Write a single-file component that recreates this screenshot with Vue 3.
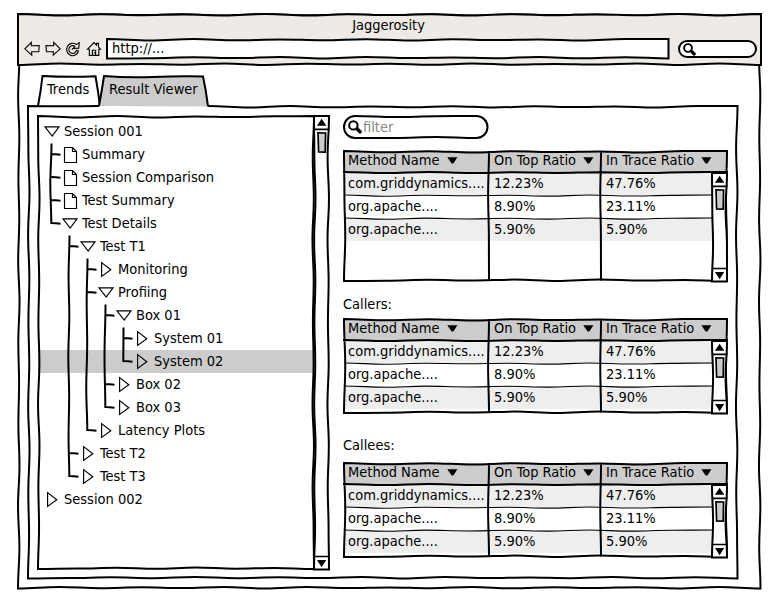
<script setup>
import { h } from 'vue'

/* Hand-drawn stroke: half waves that bend to the right-hand side of the line. */
function wave(x1, y1, x2, y2, seed = 1, amp = 1.4) {
  const len = Math.hypot(x2 - x1, y2 - y1)
  const n = Math.max(1, Math.round(len / 42))
  const ux = (x2 - x1) / len
  const uy = (y2 - y1) / len
  let px = x1
  let py = y1
  let d = ''
  for (let i = 1; i <= n; i++) {
    const t = (len * i) / n
    const k = Math.abs(Math.sin(seed * 12.9 + i * 4.1))
    const off = i === n ? 0 : i % 2 ? amp * (0.7 + 0.4 * k) : amp * 0.3 * k
    const x = x1 + ux * t - uy * off
    const y = y1 + uy * t + ux * off
    const s = (len / n) * 0.4
    d += `C${px + ux * s} ${py + uy * s} ${x - ux * s} ${y - uy * s} ${x} ${y}`
    px = x
    py = y
  }
  return d
}

const line = (x1, y1, x2, y2, seed, amp) => `M${x1} ${y1}` + wave(x1, y1, x2, y2, seed, amp)

const boxPath = (w, ht, s = 1) =>
  `M0 0${wave(0, 0, w, 0, s)}${wave(w, 0, w, ht, s + 1)}${wave(w, ht, 0, ht, s + 2)}${wave(0, ht, 0, 0, s + 3)}Z`

const pillPath = (w, ht) => {
  const r = ht / 2
  return `M${r} 0${wave(r, 0, w - r, 0, 2, 1)}A${r} ${r} 0 0 1 ${w - r} ${ht}${wave(w - r, ht, r, ht, 4, 1)}A${r} ${r} 0 0 1 ${r} 0Z`
}

const Sketch = (p) =>
  h('svg', { class: 'sketch', width: p.w, height: p.h, 'aria-hidden': 'true' }, [
    h('path', {
      d: p.d,
      fill: p.fill || 'none',
      stroke: p.stroke || '#000',
      'stroke-width': p.sw || 2,
      'stroke-linejoin': 'miter'
    })
  ])
Sketch.props = ['w', 'h', 'd', 'fill', 'stroke', 'sw']

const ScrollBar = (p) => {
  const t = p.h
  return h('svg', { class: 'scroll', width: 15, height: t, 'aria-hidden': 'true' }, [
    h('path', { d: boxPath(15, t, 3), fill: '#fff', stroke: '#000', 'stroke-width': 2 }),
    h('path', { d: `M0 13.4H15.5M0 ${t - 13}H15`, stroke: '#000', 'stroke-width': 1.6 }),
    h('path', { d: `M3 9.8L7.6 2.8L12.4 9.8ZM3 ${t - 9.6}H12.2L7.6 ${t - 2.2}Z`, fill: '#000' }),
    h('path', { d: 'M4 16.8L11.6 17L11.2 36.2L4.6 36Z', fill: '#ccc', stroke: '#000', 'stroke-width': 1.7 })
  ])
}
ScrollBar.props = ['h']

const Lens = (p) =>
  h('svg', { class: 'lens', width: p.size, height: p.size, viewBox: '0 0 13 13', 'aria-hidden': 'true' }, [
    h('circle', { cx: 5, cy: 5, r: 3.9, fill: '#fff', stroke: '#000', 'stroke-width': 1.9 }),
    h('path', { d: 'M8.3 8.2L11.2 11', stroke: '#000', 'stroke-width': 3.2, 'stroke-linecap': 'round' })
  ])
Lens.props = ['size']

const tree = [
  { text: 'Session 001', depth: 0, icon: 'open' },
  { text: 'Summary', depth: 1, icon: 'doc' },
  { text: 'Session Comparison', depth: 1, icon: 'doc' },
  { text: 'Test Summary', depth: 1, icon: 'doc' },
  { text: 'Test Details', depth: 1, icon: 'open' },
  { text: 'Test T1', depth: 2, icon: 'open' },
  { text: 'Monitoring', depth: 3, icon: 'closed' },
  { text: 'Profiing', depth: 3, icon: 'open' },
  { text: 'Box 01', depth: 4, icon: 'open' },
  { text: 'System 01', depth: 5, icon: 'closed' },
  { text: 'System 02', depth: 5, icon: 'closed', selected: true },
  { text: 'Box 02', depth: 4, icon: 'closed' },
  { text: 'Box 03', depth: 4, icon: 'closed' },
  { text: 'Latency Plots', depth: 3, icon: 'closed' },
  { text: 'Test T2', depth: 2, icon: 'closed' },
  { text: 'Test T3', depth: 2, icon: 'closed' },
  { text: 'Session 002', depth: 0, icon: 'closed' }
]
const ROW = 23
const STEP = 18

/* A trunk under each open node, and a short branch to each of its children. */
function connectors() {
  let d = ''
  tree.forEach((node, i) => {
    let last = -1
    const x = 13.5 + node.depth * STEP
    for (let j = i + 1; j < tree.length && tree[j].depth > node.depth; j++) {
      if (tree[j].depth === node.depth + 1) {
        last = j
        const y = j * ROW + 11
        d += `M${x} ${y}Q${x + 4} ${y + 0.2} ${x + 9} ${y + 0.7}`
      }
    }
    if (last > 0) d += line(x, (i + 1) * ROW + 0.5, x - 0.2, last * ROW + 12, i + 1, 1)
  })
  return d
}
const treeLines = connectors()

const icons = {
  open: 'M1 4.8H15L8.2 14.1Z',
  closed: 'M3.6 2.6V16.4L12.8 9.8Z',
  doc: 'M2.5 2.5H10.5L14.5 6.5V17.5H2.5ZM10.5 2.5V6.5H14.5'
}

const columns = ['Method Name', 'On Top Ratio', 'In Trace Ratio']
const rows = [
  ['com.griddynamics....', '12.23%', '47.76%'],
  ['org.apache....', '8.90%', '23.11%'],
  ['org.apache....', '5.90%', '5.90%']
]
const tables = [
  { title: '', height: 130, cls: 'main' },
  { title: 'Callers:', height: 94, cls: 'callers' },
  { title: 'Callees:', height: 94, cls: 'callees' }
]
const rules = (ht) =>
  line(145, 0, 145, ht, 2, 0.8) + line(257, 0, 257, ht, 5, 0.8) + line(-1, 21, 384, 21, 3, 1)
const thinRules = line(0, 44, 368, 44, 1, 1.1) + line(0, 67, 368, 67, 2, 1.1)
</script>

<template>
  <main class="window">
    <Sketch :w="743" :h="575" :d="boxPath(742.5, 574.5, 1)" fill="#fff" />
    <header class="chrome">
      <Sketch :w="743" :h="51" :d="boxPath(743, 51, 2)" fill="#eeebe6" />
      <h1>Jaggerosity</h1>
      <div class="toolbar">
        <nav class="nav">
          <svg width="16" height="16" viewBox="0 0 16 16">
            <path d="M.8 7.8L7.3 1.4V4.8L15.2 4.5L14.8 10.8H7.6L7.8 14.2Z" />
          </svg>
          <svg width="16" height="16" viewBox="0 0 16 16">
            <path d="M15.2 7.8L8.7 1.4V4.8L1 4.5L1.4 10.8H8.4L8.2 14.2Z" />
          </svg>
          <svg width="16" height="16" viewBox="0 0 16 16">
            <path d="M11.4 3.6A6 6.2 0 1 0 13.5 10L11.4 9.3A3.8 3.9 0 1 1 9.8 5.3L8.2 7.4L13.8 7.2L14.2 1.6L11.4 3.6Z" />
            <path d="M8.2 7.4L6.8 8.6" />
          </svg>
          <svg width="16" height="16" viewBox="0 0 16 16">
            <path d="M1.6 8.2L8 1.6L10.6 4.1V2.4H12.5V6L14.5 8.2H12.8V14.4H3.3V8.2ZM6.4 14.2V9.2H9.6V14.2" />
            <path d="M8.4 11.3V12.4" />
          </svg>
        </nav>
        <div class="address">
          <Sketch :w="562" :h="19" :d="boxPath(561.5, 19.5, 3)" fill="#fff" />
          <span>http://...</span>
        </div>
        <div class="search">
          <Sketch :w="77" :h="16" :d="pillPath(77, 16)" fill="#fff" />
          <Lens :size="13" />
        </div>
      </div>
    </header>

    <div class="tabs">
      <div class="tab first">
        <Sketch :w="62" :h="30" d="M0 30Q3 14 4.5 0Q30 1.5 57.5 .3Q60 14 62 30" fill="#fff" />
        <span>Trends</span>
      </div>
      <div class="tab active">
        <Sketch :w="109" :h="30" d="M0 30Q3 14 5 0Q28 2 54 1T104 .5Q107 14 109 30.4" fill="#ccc" />
        <span>Result Viewer</span>
      </div>
    </div>

    <section class="panel">
      <Sketch
        :w="710"
        :h="473"
        :d="line(180, 0, 709.5, 0, 3) + wave(709.5, 0, 709.5, 472.5, 4) + wave(709.5, 472.5, 0, 472.5, 5) + wave(0, 472.5, 0, 0, 6) + wave(0, 0, 71, 0, 7, 0.4)"
      />
      <div class="browser">
        <div class="tree">
          <ul>
            <li
              v-for="node in tree"
              :key="node.text"
              :class="{ selected: node.selected }"
              :style="{ paddingLeft: 6 + node.depth * STEP + 'px' }"
            >
              <svg class="node" width="16" height="19"><path :d="icons[node.icon]" /></svg>
              <span>{{ node.text }}</span>
            </li>
            <Sketch :w="276" :h="391" :d="treeLines" />
          </ul>
          <Sketch :w="276" :h="453" :d="boxPath(276, 453, 4)" />
        </div>
        <ScrollBar :h="453.5" />
      </div>

      <div class="results">
        <div class="filter">
          <Sketch :w="144" :h="22" :d="pillPath(143.5, 22)" fill="#fff" />
          <Lens :size="14" />
          <span>filter</span>
        </div>
        <template v-for="t in tables" :key="t.cls">
          <h2 v-if="t.title" :class="t.cls">{{ t.title }}</h2>
          <div class="grid" :class="t.cls">
            <div class="row head">
              <span v-for="c in columns" :key="c" class="cell">
                <b>{{ c }}</b>
                <svg width="11" height="7"><path d="M.3 .3H10.4L6.4 6.5H4.6Z" /></svg>
              </span>
            </div>
            <div class="body">
              <div v-for="(r, i) in rows" :key="i" class="row">
                <span v-for="(v, j) in r" :key="j" class="cell">{{ v }}</span>
              </div>
            </div>
            <Sketch :w="383" :h="t.height" :d="thinRules" :sw="1.1" />
            <Sketch :w="383" :h="t.height" :d="boxPath(383, t.height, 5) + rules(t.height)" />
            <div class="bar"><ScrollBar :h="t.height - 21.5" /></div>
          </div>
        </template>
      </div>
    </section>
  </main>
</template>

<style>
body {
  background: #fff;
}
.sketch {
  position: absolute;
  left: 0;
  top: 0;
  overflow: visible;
  pointer-events: none;
}
.scroll {
  display: block;
  position: relative;
  flex: none;
  overflow: visible;
}
.lens {
  position: relative;
  flex: none;
}
</style>

<style scoped>
.window {
  position: relative;
  box-sizing: border-box;
  width: 743px;
  height: 575px;
  margin: 14px 18px;
  font-family: "DejaVu Sans Condensed", "DejaVu Sans", sans-serif;
  font-size: 14.5px;
  font-stretch: 90%;
  line-height: 23px;
  color: #000;
  white-space: nowrap;
}
.window span,
h1,
h2 {
  position: relative;
}
h1,
h2 {
  margin: 0;
  font: inherit;
}
.chrome {
  position: relative;
  height: 51px;
}
h1 {
  width: 741px;
  text-align: center;
}
.toolbar {
  display: flex;
  align-items: center;
  height: 23px;
}
.nav {
  position: relative;
  display: flex;
  gap: 4.5px;
  width: 83px;
  margin-left: 6px;
}
.nav svg {
  fill: none;
  stroke: #000;
  stroke-width: 1.1;
}
.address {
  position: relative;
  width: 562px;
  height: 19px;
  line-height: 19px;
}
.address span {
  margin-left: 5px;
}
.search {
  position: relative;
  display: flex;
  align-items: center;
  width: 70px;
  height: 16px;
  margin: 1.5px 0 0 9.5px;
  padding-left: 4px;
}
.tabs {
  display: flex;
  padding: 11px 0 0 19.5px;
}
.tab {
  position: relative;
  height: 30px;
  line-height: 27px;
}
.tab.first {
  width: 61.5px;
}
.tab.active {
  width: 109px;
}
.tab span {
  margin-left: 9.5px;
}
.tab.active span {
  margin-left: 10px;
}
.panel {
  position: relative;
  display: flex;
  width: 710px;
  height: 473px;
  margin-left: 10px;
}
.browser {
  display: flex;
  width: 291px;
  margin: 10px 0 0 10px;
}
.tree {
  position: relative;
  width: 276px;
  height: 453px;
  padding-top: 3.5px;
  box-sizing: border-box;
}
ul {
  position: relative;
  margin: 0;
  padding: 0;
  list-style: none;
}
li {
  display: flex;
  align-items: center;
  height: 23px;
}
li.selected {
  background: #ccc;
}
.node {
  position: relative;
  flex: none;
  fill: none;
  stroke: #000;
  stroke-width: 1.15;
}
li span {
  margin-left: 4px;
}
.results {
  margin: 10px 0 0 14.5px;
}
.filter {
  position: relative;
  display: flex;
  align-items: center;
  width: 144px;
  height: 22px;
  color: #888;
}
.filter span {
  line-height: 21px;
  margin-left: 1.5px;
}
.filter .lens {
  margin-left: 4px;
}
.grid {
  position: relative;
  width: 383px;
  margin-left: 0.5px;
}
.grid.main {
  height: 131px;
  margin-top: 13px;
}
.grid.callers,
.grid.callees {
  height: 95px;
}
h2.callers {
  height: 26px;
  margin-top: 11px;
}
h2.callees {
  height: 29px;
  margin-top: 20px;
}
h2 {
  left: -0.5px;
}
.row {
  display: grid;
  grid-template-columns: 145px 112px 1fr;
  height: 23px;
  line-height: 22px;
}
.cell {
  padding-left: 4px;
}
.cell:not(:first-child) {
  padding-left: 5px;
}
.row.head {
  height: 21px;
  background: #ccc;
  line-height: 19px;
}
.head .cell {
  display: flex;
  align-items: center;
  gap: 7px;
  height: 19px;
}
.head b {
  font-weight: inherit;
}
.body {
  width: 368px;
}
.body .row:nth-child(odd) {
  background: #eee;
}
.bar {
  position: absolute;
  left: 368px;
  top: 21.5px;
}
</style>
